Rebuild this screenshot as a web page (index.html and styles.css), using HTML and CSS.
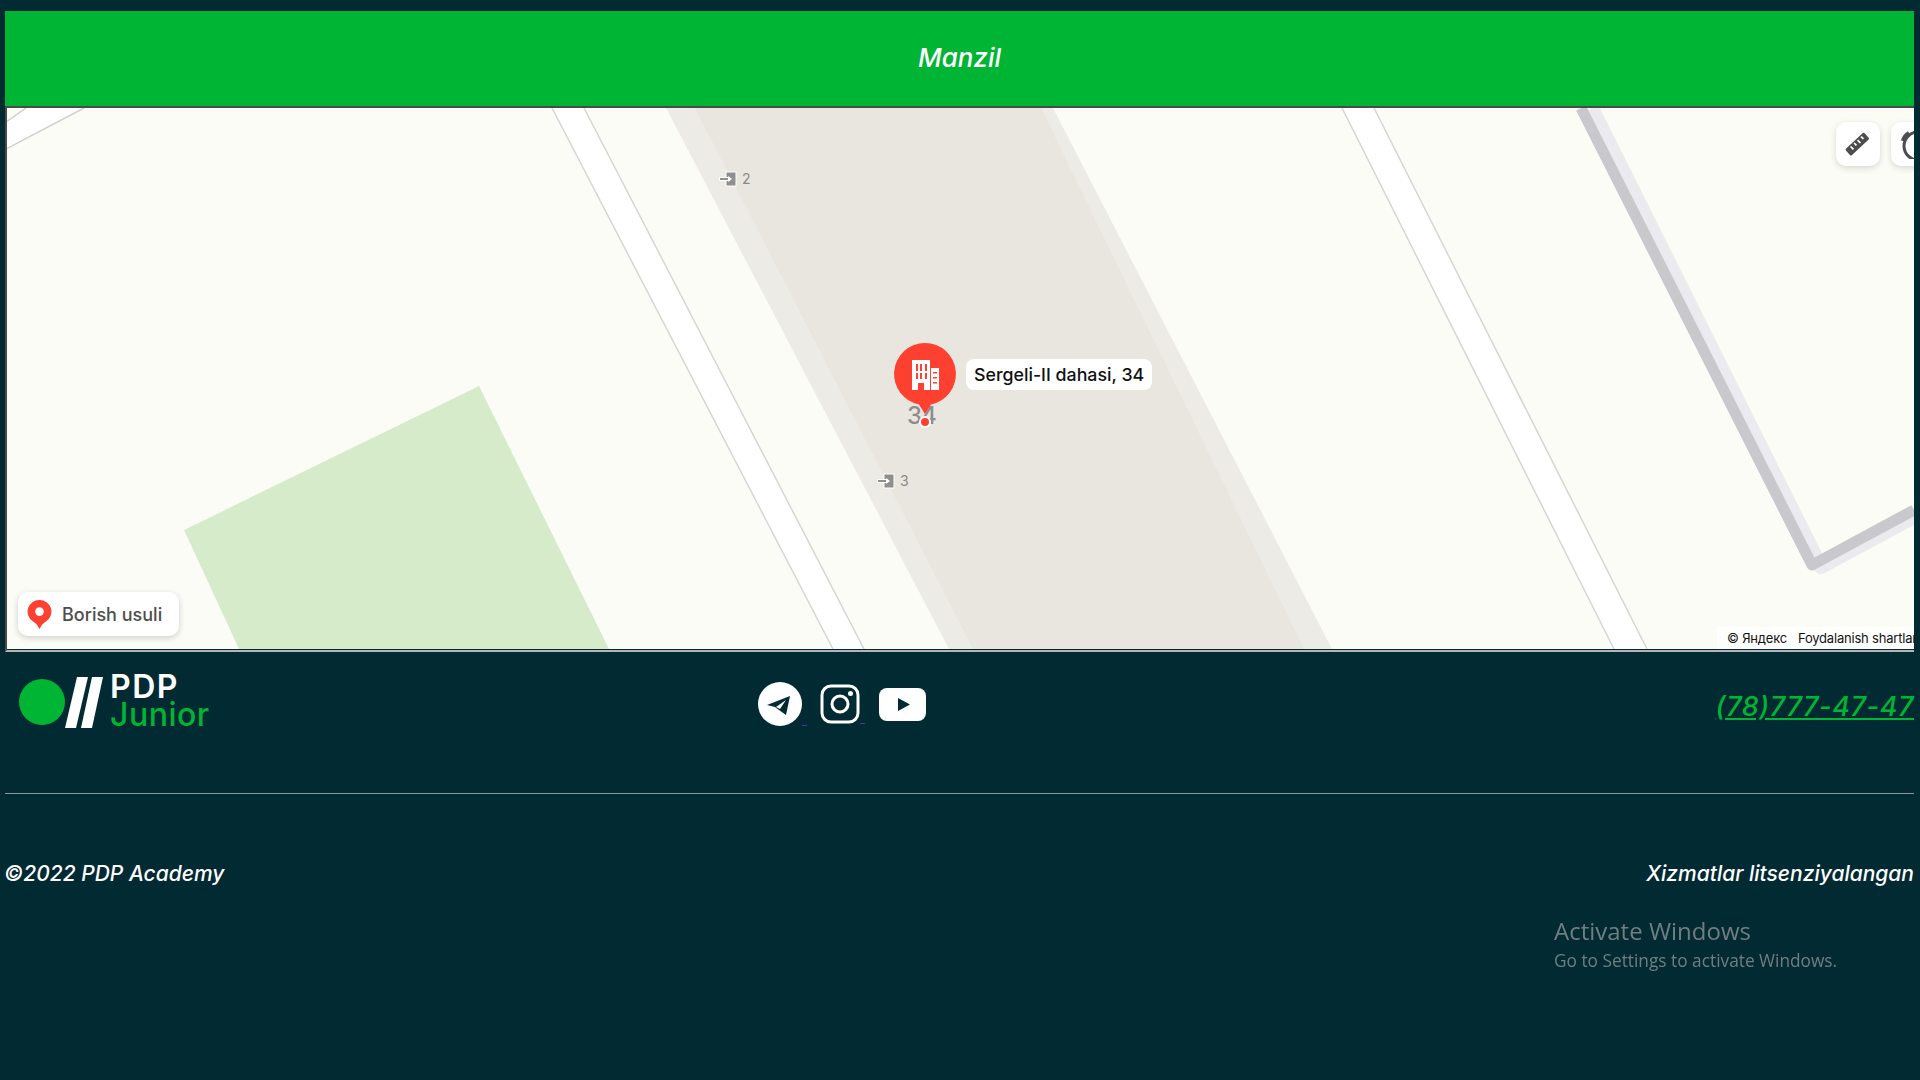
FILE: index.html
```html
<!DOCTYPE html>
<html lang="uz">
<head>
<meta charset="utf-8">
<title>Manzil</title>
<link rel="stylesheet" href="styles.css">
</head>
<body>
<div class="page">
  <header class="banner"><h2 class="banner-title">Manzil</h2></header>
  <section class="map">
    <svg class="map-canvas" viewBox="7 108 1907 541" width="1907" height="541" aria-hidden="true">
      <rect x="6" y="108" width="1908" height="541" fill="#fcfcf7"/>
      <polygon points="479,386 184,530 239,649 609,649" fill="#d6ebca"/>
      <polygon points="666,108 1053,108 1332,649 949,649" fill="#edebe5"/>
      <polygon points="695,108 1041,108 1304,649 973,649" fill="#e9e5df"/>
      <polygon points="552,108 584,108 864,649 833,649" fill="#ffffff"/>
      <path d="M552 108L833 649M584 108L864 649" stroke="#d6d6d3" stroke-width="1.500" fill="none"/>
      <polygon points="1342,108 1374,108 1647,649 1614,649" fill="#ffffff"/>
      <path d="M1342 108L1614 649M1374 108L1647 649" stroke="#d6d6d3" stroke-width="1.500" fill="none"/>
      <polygon points="6,122 26,108 84,108 6,149" fill="#ffffff"/>
      <path d="M6 122L26 108M6 149L84 108" stroke="#cfcfcd" stroke-width="1.500" fill="none"/>
      <polyline points="1592,108 1821,567 1914,517" fill="none" stroke="#ebebef" stroke-width="14" stroke-linejoin="round"/>
      <polyline points="1581,108 1812,565 1914,510" fill="none" stroke="#c9c9cd" stroke-width="11" stroke-linejoin="round"/>
    </svg>

    <div class="entrance entrance-two">
      <svg class="entrance-icon" viewBox="0 0 20 16"><rect x="8" y="1" width="10" height="14" fill="#8f8f8f" stroke="#fff"/><path d="M1 8H12" stroke="#fff" stroke-width="4"/><path d="M2 8H11" stroke="#8f8f8f" stroke-width="2"/><path d="M10 5L14 8L10 11z" fill="#fff"/></svg>
      <span class="entrance-num">2</span>
    </div>
    <div class="entrance entrance-three">
      <svg class="entrance-icon" viewBox="0 0 20 16"><rect x="8" y="1" width="10" height="14" fill="#8f8f8f" stroke="#fff"/><path d="M1 8H12" stroke="#fff" stroke-width="4"/><path d="M2 8H11" stroke="#8f8f8f" stroke-width="2"/><path d="M10 5L14 8L10 11z" fill="#fff"/></svg>
      <span class="entrance-num">3</span>
    </div>

    <span class="house-num">34</span>
    <div class="pin">
      <svg viewBox="0 0 64 76" width="64" height="76">
        <path d="M32 1a31 31 0 0 1 6 61.400L32 72 26 62.400A31 31 0 0 1 32 1z" fill="#fd402f"/>
        <path d="M19 18H37V48H31V41H25V48H19z" fill="#fff"/>
        <path d="M38 26H46V48H38z" fill="#fff"/>
        <path d="M23 22h2v7h-2zM27 22h2v7h-2zM32 22h2v7h-2zM23 31h2v6h-2zM27 31h2v6h-2zM32 31h2v6h-2zM40 30h4v1.500h-4zM40 35h4v1.500h-4zM40 40h4v1.500h-4z" fill="#fd402f"/>
      </svg>
      <span class="pin-dot"></span>
    </div>
    <div class="pin-label">Sergeli-II dahasi, 34</div>

    <div class="map-tool tool-ruler">
      <svg viewBox="0 0 24 24" width="28" height="28"><path d="M2.500 17L17 3.500a1 1 0 0 1 1.400 0L22 7.500a1 1 0 0 1 0 1.400L7.500 22.500a1 1 0 0 1-1.400 0L2.500 18.400a1 1 0 0 1 0-1.400z" fill="#4d4d4d"/><path d="M6.500 15l2.500 2.500M9.500 12l2 2M12.500 9.500l2.500 2.500M15.500 6.500l2 2" stroke="#fff" stroke-width="1.500"/></svg>
    </div>
    <div class="map-tool tool-search">
      <svg viewBox="0 0 30 30" width="30" height="30"><circle cx="20" cy="17" r="14" fill="none" stroke="#4d4d4d" stroke-width="3"/><path d="M5 12a12 12 0 0 1 6-8" stroke="#4d4d4d" stroke-width="4" fill="none"/></svg>
    </div>

    <div class="route-btn">
      <svg viewBox="0 0 26 32" width="25" height="31"><path d="M13 1a12 12 0 0 1 7 22c-3 2-5 4-7 8-2-4-4-6-7-8A12 12 0 0 1 13 1z" fill="#fd402f"/><circle cx="13" cy="13" r="4.500" fill="#fff"/></svg>
      <span>Borish usuli</span>
    </div>

    <div class="map-copy"><span>© Яндекс</span><span class="map-terms">Foydalanish shartlari</span></div>
  </section>

  <footer class="footer">
    <div class="footer-top">
      <a class="logo">
        <span class="logo-dot"></span>
        <svg class="logo-bars" viewBox="0 0 38 51" width="38" height="51"><polygon points="12,0 23,0 11,51 0,51" fill="#fff"/><polygon points="27,0 38,0 27,51 16,51" fill="#fff"/></svg>
        <span class="logo-text"><span class="logo-pdp">PDP</span><span class="logo-junior">Junior</span></span>
      </a>
      <div class="socials">
        <a class="social social-link">
          <svg viewBox="0 0 44 44" width="44" height="44"><circle cx="22" cy="22" r="22" fill="#fff"/><path d="M9 23L32 14L28 33L21 28L17 25z" fill="#012a33"/><path d="M18 25L28 18L22 27z" fill="#fff"/></svg>
        </a>
        <a class="social social-link">
          <svg viewBox="0 0 40 40" width="40" height="40"><rect x="2" y="2" width="36" height="36" rx="9" fill="none" stroke="#fff" stroke-width="3"/><circle cx="20" cy="20" r="8" fill="none" stroke="#fff" stroke-width="3"/><circle cx="30.500" cy="9.500" r="2.500" fill="#fff"/></svg>
        </a>
        <a class="social">
          <svg viewBox="0 0 47 33" width="47" height="33"><rect x="0" y="0" width="47" height="33" rx="8" fill="#fff"/><path d="M19 10L31 16.500L19 23z" fill="#012a33"/></svg>
        </a>
      </div>
      <a class="phone">(78)777-47-47</a>
    </div>
    <hr class="rule">
    <div class="footer-bottom">
      <span class="copyright">©2022 PDP Academy</span>
      <span class="license">Xizmatlar litsenziyalangan</span>
    </div>
  </footer>
</div>
<div class="activate">
  <div class="activate-title">Activate Windows</div>
  <div class="activate-sub">Go to Settings to activate Windows.</div>
</div>
</body>
</html>
```
FILE: styles.css
```css
* { box-sizing: border-box; }
html, body { margin: 0; height: 100%; }
body {
  background: #012a33;
  overflow: hidden;
  font-family: "Inter", "Liberation Sans", sans-serif;
}
.page {
  padding: 11px 6px 0 5px;
  height: 1080px;
}
.banner {
  height: 95px;
  background: #00b534;
  display: flex;
  align-items: center;
  justify-content: center;
  padding-bottom: 2px;
}
.banner-title {
  margin: 0;
  color: #fff;
  font-size: 26px;
  font-weight: 500;
  font-style: italic;
}
.map {
  position: relative;
  height: 546px;
  border-style: solid;
  border-width: 2px;
  border-color: #4a4a4a #eee #b5b5b5 #4a4a4a;
  border-right: 0;
  overflow: hidden;
}
.map-canvas { display: block; }
.entrance {
  position: absolute;
  display: flex;
  align-items: center;
  gap: 4px;
  font-size: 14px;
  color: #8a8a8a;
}
.entrance-icon { width: 20px; height: 16px; }
.entrance-two { left: 711px; top: 62px; }
.entrance-three { left: 869px; top: 364px; }
.house-num {
  position: absolute;
  left: 900px;
  top: 293px;
  font-size: 24px;
  font-weight: 500;
  color: #8d8d8d;
  letter-spacing: -1px;
}
.pin {
  position: absolute;
  left: 886px;
  top: 234px;
  width: 64px;
  height: 86px;
}
.pin svg { display: block; }
.pin-dot {
  position: absolute;
  left: 28px;
  top: 76px;
  width: 8px;
  height: 8px;
  border-radius: 50%;
  background: #fd402f;
  box-shadow: 0 0 0 2px #fff;
}
.pin-label {
  position: absolute;
  left: 959px;
  top: 251px;
  height: 31px;
  padding: 0 8px;
  display: flex;
  align-items: center;
  background: #fff;
  border-radius: 8px;
  font-size: 17.800px;
  font-weight: 500;
  color: #111;
  white-space: nowrap;
}
.map-tool {
  position: absolute;
  top: 14px;
  width: 44px;
  height: 44px;
  background: #fff;
  border-radius: 10px;
  box-shadow: 0 2px 6px rgba(0,0,0,.15);
  display: flex;
  align-items: center;
  justify-content: center;
}
.tool-ruler { left: 1829px; padding: 0 2px 2px 0; }
.tool-search { left: 1884px; }
.route-btn {
  position: absolute;
  left: 11px;
  top: 484px;
  width: 161px;
  height: 44px;
  padding-left: 9px;
  display: flex;
  align-items: center;
  gap: 10px;
  background: #fff;
  border-radius: 10px;
  box-shadow: 0 2px 6px rgba(0,0,0,.18);
  font-size: 18px;
  font-weight: 500;
  color: #4d4d4d;
}
.map-copy {
  position: absolute;
  left: 1710px;
  bottom: 1px;
  height: 22px;
  width: 200px;
  padding-left: 10px;
  display: flex;
  align-items: center;
  gap: 11px;
  background: rgba(255,255,255,.8);
  font-size: 13px;
  color: #111;
  white-space: nowrap;
  letter-spacing: -0.2px;
}
.footer-top {
  display: grid;
  grid-template-columns: 753px 1fr auto;
  align-items: center;
  height: 106px;
}
.logo {
  display: flex;
  align-items: center;
  padding-left: 14px;
  margin-bottom: 6px;
}
.logo-dot {
  width: 46px;
  height: 46px;
  border-radius: 50%;
  background: #00b534;
}
.logo-text {
  display: flex;
  flex-direction: column;
  margin: 0 0 3px 7px;
  font-size: 32px;
  line-height: 28px;
}
.logo-pdp { color: #fff; font-weight: 600; letter-spacing: 1.500px; }
.logo-junior { color: #00b534; font-weight: 500; letter-spacing: 0.500px; }
.socials {
  display: flex;
  align-items: center;
  gap: 18px;
  margin-bottom: 2px;
}
.social { display: block; position: relative; line-height: 0; }
.social:last-child { margin-left: 1px; }
.social-link::after {
  content: "";
  position: absolute;
  right: -5px;
  bottom: 0;
  width: 5px;
  height: 1px;
  background: #5a2aa8;
}
.phone {
  color: #00b534;
  font-size: 27px;
  font-style: italic;
  font-weight: 500;
  letter-spacing: 0.6px;
  text-decoration: underline;
  margin-top: 2px;
}
.rule {
  margin: 35px 0 0;
  border: 0;
  height: 1px;
  background: #8f9698;
}
.footer-bottom {
  display: flex;
  justify-content: space-between;
  align-items: center;
  margin: 67px 0 0 -1px;
  color: #fff;
  font-size: 21px;
  font-style: italic;
  font-weight: 500;
}
.activate {
  position: fixed;
  left: 1554px;
  top: 915px;
  color: #707e82;
  font-family: "Open Sans", sans-serif;
}
.activate-title { font-size: 24px; line-height: 32px; }
.activate-sub { font-size: 17.300px; line-height: 27px; }
```
